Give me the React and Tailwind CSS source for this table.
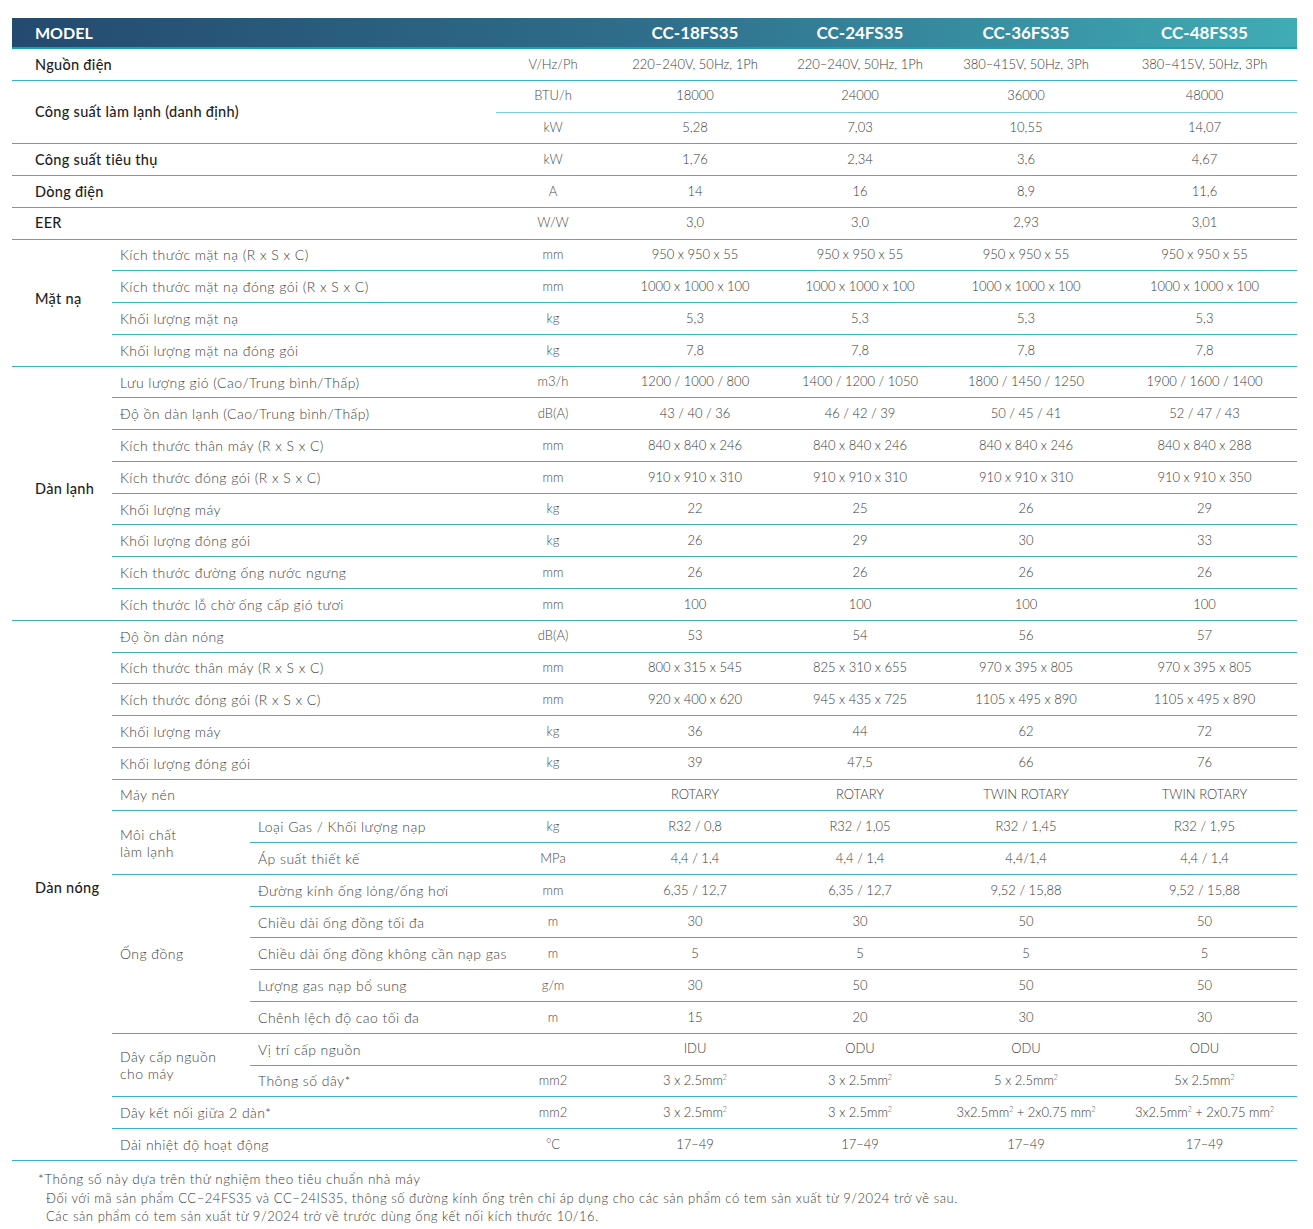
import React from 'react';

const line = 'border-b-[1.5px] border-[#3cb2c4]';
const cell = `h-[31.77px] p-0 align-middle ${line}`;
const valCls = `${cell} text-center text-[13px] font-light text-[#3a3a3a] whitespace-nowrap`;
const unitCls = `${cell} text-center text-[13px] font-light text-[#4a4a4a]`;
const subCls = `${cell} pl-2 text-left text-[14px] tracking-[0.45px] font-light text-[#444] whitespace-nowrap`;
const mainCls = `${cell} pl-[23px] text-left text-[14.5px] tracking-[0.3px] font-medium text-[#1e1e1e] whitespace-nowrap`;

const Vals = ({ v }) => (
  <>
    {v.map((x, i) => (
      <td key={i} className={valCls}>
        {x}
      </td>
    ))}
  </>
);

const Sq = () => <sup className="text-[7px] -top-[5px]">2</sup>;

const mm2 = (t) => (
  <>
    {t}mm<Sq />
  </>
);

// sub-row inside a group: label spans columns B and C
const SubRow = ({ label, unit, v }) => (
  <tr>
    <td colSpan={2} className={subCls}>{label}</td>
    <td className={unitCls}>{unit}</td>
    <Vals v={v} />
  </tr>
);

const MainRow = ({ label, unit, v }) => (
  <tr>
    <td colSpan={3} className={mainCls}>{label}</td>
    <td className={unitCls}>{unit}</td>
    <Vals v={v} />
  </tr>
);

const models = ['CC-18FS35', 'CC-24FS35', 'CC-36FS35', 'CC-48FS35'];

export default function App() {
  return (
    <div
      className="min-h-screen bg-white pt-[18px] pl-[12px]"
      style={{ fontFamily: 'Lato, "Noto Sans", sans-serif' }}
    >
      <div className="w-[1285px]">
        {/* Header */}
        <div className="flex h-[31px] items-center border-b-2 border-[#17a3b6] bg-gradient-to-r from-[#244a6f] via-[#2f6f8c] to-[#40acb5] text-white">
          <div className="w-[598px] pl-[23px] text-[16px] font-bold">MODEL</div>
          <div className="w-[170px] text-center text-[17px] font-bold">{models[0]}</div>
          <div className="w-[160px] text-center text-[17px] font-bold">{models[1]}</div>
          <div className="w-[172px] text-center text-[17px] font-bold">{models[2]}</div>
          <div className="w-[185px] text-center text-[17px] font-bold">{models[3]}</div>
        </div>

        <table className="w-[1285px] table-fixed border-separate border-spacing-0">
          <colgroup>
            <col className="w-[100px]" />
            <col className="w-[138px]" />
            <col className="w-[246px]" />
            <col className="w-[114px]" />
            <col className="w-[170px]" />
            <col className="w-[160px]" />
            <col className="w-[172px]" />
            <col className="w-[185px]" />
          </colgroup>
          <tbody>
            <MainRow
              label="Nguồn điện"
              unit="V/Hz/Ph"
              v={['220–240V, 50Hz, 1Ph', '220–240V, 50Hz, 1Ph', '380–415V, 50Hz, 3Ph', '380–415V, 50Hz, 3Ph']}
            />
            <tr>
              <td colSpan={3} rowSpan={2} className={mainCls}>Công suất làm lạnh (danh định)</td>
              <td className={`${unitCls} border-[#7ccbd6]`}>BTU/h</td>
              {['18000', '24000', '36000', '48000'].map((x) => (
                <td key={x} className={`${valCls} border-[#7ccbd6]`}>{x}</td>
              ))}
            </tr>
            <tr>
              <td className={unitCls}>kW</td>
              <Vals v={['5,28', '7,03', '10,55', '14,07']} />
            </tr>
            <MainRow label="Công suất tiêu thụ" unit="kW" v={['1,76', '2,34', '3,6', '4,67']} />
            <MainRow label="Dòng điện" unit="A" v={['14', '16', '8,9', '11,6']} />
            <MainRow label="EER" unit="W/W" v={['3,0', '3,0', '2,93', '3,01']} />

            {/* Mặt nạ */}
            <tr>
              <td rowSpan={4} className={`${mainCls} pb-2`}>Mặt nạ</td>
              <td colSpan={2} className={subCls}>Kích thước mặt nạ (R x S x C)</td>
              <td className={unitCls}>mm</td>
              <Vals v={['950 x 950 x 55', '950 x 950 x 55', '950 x 950 x 55', '950 x 950 x 55']} />
            </tr>
            <SubRow label="Kích thước mặt nạ đóng gói (R x S x C)" unit="mm" v={['1000 x 1000 x 100', '1000 x 1000 x 100', '1000 x 1000 x 100', '1000 x 1000 x 100']} />
            <SubRow label="Khối lượng mặt nạ" unit="kg" v={['5,3', '5,3', '5,3', '5,3']} />
            <SubRow label="Khối lượng mặt na đóng gói" unit="kg" v={['7,8', '7,8', '7,8', '7,8']} />

            {/* Dàn lạnh */}
            <tr>
              <td rowSpan={8} className={`${mainCls} pb-2`}>Dàn lạnh</td>
              <td colSpan={2} className={subCls}>Lưu lượng gió (Cao/Trung bình/Thấp)</td>
              <td className={unitCls}>m3/h</td>
              <Vals v={['1200 / 1000 / 800', '1400 / 1200 / 1050', '1800 / 1450 / 1250', '1900 / 1600 / 1400']} />
            </tr>
            <SubRow label="Độ ồn dàn lạnh (Cao/Trung bình/Thấp)" unit="dB(A)" v={['43 / 40 / 36', '46 / 42 / 39', '50 / 45 / 41', '52 / 47 / 43']} />
            <SubRow label="Kích thước thân máy (R x S x C)" unit="mm" v={['840 x 840 x 246', '840 x 840 x 246', '840 x 840 x 246', '840 x 840 x 288']} />
            <SubRow label="Kích thước đóng gói (R x S x C)" unit="mm" v={['910 x 910 x 310', '910 x 910 x 310', '910 x 910 x 310', '910 x 910 x 350']} />
            <SubRow label="Khối lượng máy" unit="kg" v={['22', '25', '26', '29']} />
            <SubRow label="Khối lượng đóng gói" unit="kg" v={['26', '29', '30', '33']} />
            <SubRow label="Kích thước đường ống nước ngưng" unit="mm" v={['26', '26', '26', '26']} />
            <SubRow label="Kích thước lỗ chờ ống cấp gió tươi" unit="mm" v={['100', '100', '100', '100']} />

            {/* Dàn nóng */}
            <tr>
              <td rowSpan={17} className={`${mainCls} pb-1`}>Dàn nóng</td>
              <td colSpan={2} className={subCls}>Độ ồn dàn nóng</td>
              <td className={unitCls}>dB(A)</td>
              <Vals v={['53', '54', '56', '57']} />
            </tr>
            <SubRow label="Kích thước thân máy (R x S x C)" unit="mm" v={['800 x 315 x 545', '825 x 310 x 655', '970 x 395 x 805', '970 x 395 x 805']} />
            <SubRow label="Kích thước đóng gói (R x S x C)" unit="mm" v={['920 x 400 x 620', '945 x 435 x 725', '1105 x 495 x 890', '1105 x 495 x 890']} />
            <SubRow label="Khối lượng máy" unit="kg" v={['36', '44', '62', '72']} />
            <SubRow label="Khối lượng đóng gói" unit="kg" v={['39', '47,5', '66', '76']} />
            <SubRow label="Máy nén" unit="" v={['ROTARY', 'ROTARY', 'TWIN ROTARY', 'TWIN ROTARY']} />

            <tr>
              <td rowSpan={2} className={`${subCls} leading-[17px]`}>Môi chất<br />làm lạnh</td>
              <td className={subCls}>Loại Gas / Khối lượng nạp</td>
              <td className={unitCls}>kg</td>
              <Vals v={['R32 / 0,8', 'R32 / 1,05', 'R32 / 1,45', 'R32 / 1,95']} />
            </tr>
            <tr>
              <td className={subCls}>Áp suất thiết kế</td>
              <td className={unitCls}>MPa</td>
              <Vals v={['4,4 / 1,4', '4,4 / 1,4', '4,4/1,4', '4,4 / 1,4']} />
            </tr>

            <tr>
              <td rowSpan={5} className={subCls}>Ống đồng</td>
              <td className={subCls}>Đường kính ống lỏng/ống hơi</td>
              <td className={unitCls}>mm</td>
              <Vals v={['6,35 / 12,7', '6,35 / 12,7', '9,52 / 15,88', '9,52 / 15,88']} />
            </tr>
            <tr>
              <td className={subCls}>Chiều dài ống đồng tối đa</td>
              <td className={unitCls}>m</td>
              <Vals v={['30', '30', '50', '50']} />
            </tr>
            <tr>
              <td className={subCls}>Chiều dài ống đồng không cần nạp gas</td>
              <td className={unitCls}>m</td>
              <Vals v={['5', '5', '5', '5']} />
            </tr>
            <tr>
              <td className={subCls}>Lượng gas nạp bổ sung</td>
              <td className={unitCls}>g/m</td>
              <Vals v={['30', '50', '50', '50']} />
            </tr>
            <tr>
              <td className={subCls}>Chênh lệch độ cao tối đa</td>
              <td className={unitCls}>m</td>
              <Vals v={['15', '20', '30', '30']} />
            </tr>

            <tr>
              <td rowSpan={2} className={`${subCls} leading-[17px]`}>Dây cấp nguồn<br />cho máy</td>
              <td className={subCls}>Vị trí cấp nguồn</td>
              <td className={unitCls}></td>
              <Vals v={['IDU', 'ODU', 'ODU', 'ODU']} />
            </tr>
            <tr>
              <td className={subCls}>Thông số dây*</td>
              <td className={unitCls}>mm2</td>
              <Vals v={[mm2('3 x 2.5'), mm2('3 x 2.5'), mm2('5 x 2.5'), mm2('5x 2.5')]} />
            </tr>
            <SubRow
              label="Dây kết nối giữa 2 dàn*"
              unit="mm2"
              v={[
                mm2('3 x 2.5'),
                mm2('3 x 2.5'),
                <>{mm2('3x2.5')} + 2x0.75 mm<Sq /></>,
                <>{mm2('3x2.5')} + 2x0.75 mm<Sq /></>,
              ]}
            />
            <SubRow label="Dải nhiệt độ hoạt động" unit="°C" v={['17–49', '17–49', '17–49', '17–49']} />
          </tbody>
        </table>

        {/* Footnotes */}
        <div className="pt-[9px] font-light text-[#3a3a3a]">
          <p className="pl-[26px] text-[13.5px] tracking-[0.5px] leading-[19px]">*Thông số này dựa trên thử nghiệm theo tiêu chuẩn nhà máy</p>
          <p className="pl-[34px] text-[13px] tracking-[0.55px] leading-[18px]">
            Đối với mã sản phẩm CC–24FS35 và CC–24IS35, thông số đường kính ống trên chỉ áp dụng cho các sản phẩm có tem sản xuất từ 9/2024 trở về sau.
          </p>
          <p className="pl-[34px] text-[13px] tracking-[0.55px] leading-[18px]">
            Các sản phẩm có tem sản xuất từ 9/2024 trở về trước dùng ống kết nối kích thước 10/16.
          </p>
        </div>
      </div>
    </div>
  );
}
